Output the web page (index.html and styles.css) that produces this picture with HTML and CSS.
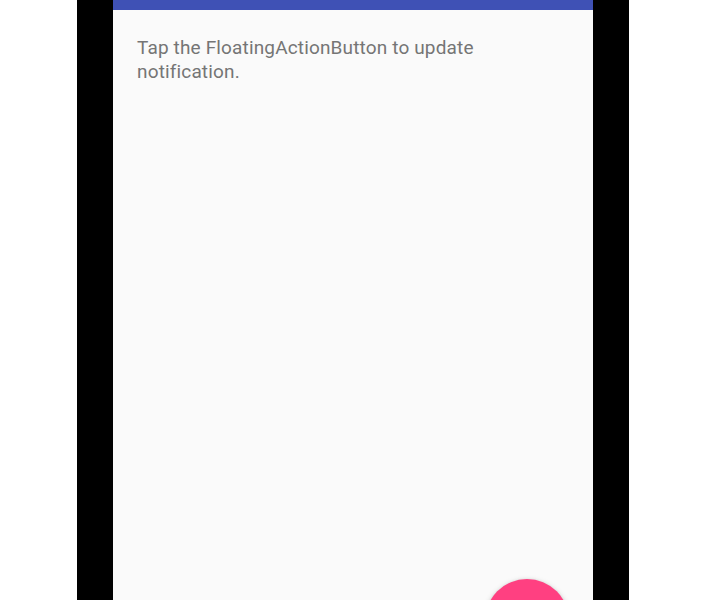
FILE: index.html
```html
<!DOCTYPE html>
<html>
<head>
<meta charset="utf-8">
<link rel="stylesheet" href="styles.css">
</head>
<body>
<div class="page">
  <div class="device">
    <div class="screen">
      <div class="appbar"></div>
      <div class="content">
        <p class="message">Tap the FloatingActionButton to update notification.</p>
      </div>
      <button class="fab" aria-label="Update notification"></button>
    </div>
  </div>
</div>
</body>
</html>
```
FILE: styles.css
```css
html, body {
  margin: 0;
  padding: 0;
  background: #ffffff;
  height: 600px;
  overflow: hidden;
}
.page {
  display: flex;
  justify-content: flex-start;
  height: 600px;
  padding-left: 77px;
}
.device {
  width: 480px;
  height: 600px;
  background: #000;
  padding: 0 36px;
}
.screen {
  position: relative;
  width: 480px;
  height: 600px;
  background: #fafafa;
  overflow: hidden;
  display: flex;
  flex-direction: column;
}
.appbar {
  height: 10px;
  background: #3f51b5;
  flex: none;
}
.content {
  padding: 26px 24px 0 24px;
}
.message {
  margin: 0;
  font-family: Roboto, "Noto Sans", sans-serif;
  font-size: 19px;
  letter-spacing: 0.15px;
  line-height: 24px;
  color: #757575;
}
.fab {
  position: absolute;
  left: 372px;
  top: 579px;
  width: 84px;
  height: 84px;
  border-radius: 50%;
  border: none;
  padding: 0;
  background: #ff4081;
  box-shadow: 0 2px 6px rgba(0,0,0,0.2), 0 0 3px rgba(0,0,0,0.08);
}
```
